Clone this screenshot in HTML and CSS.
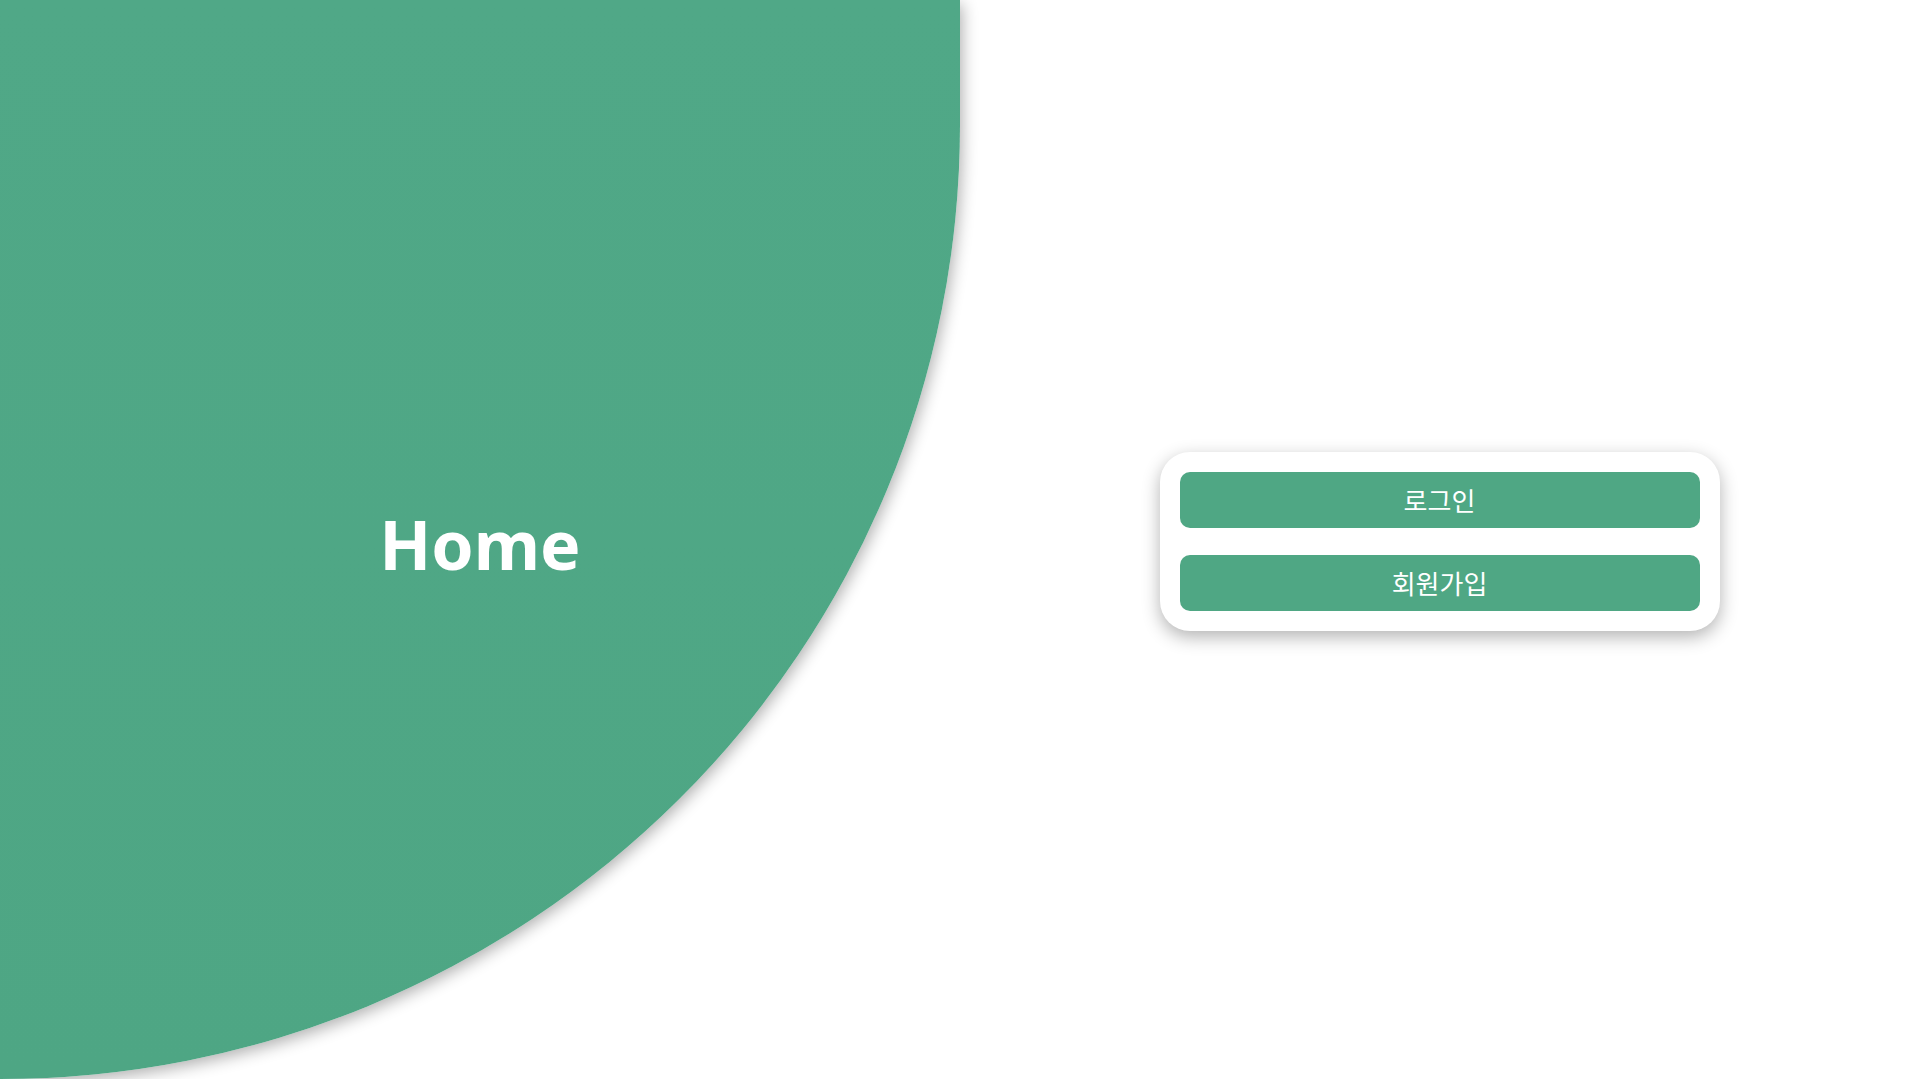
FILE: index.html
```html
<!DOCTYPE html>
<html lang="ko">
<head>
<meta charset="utf-8">
<title>Home</title>
<link rel="stylesheet" href="styles.css">
</head>
<body>
<main class="page">
  <section class="hero">
    <h1 class="hero-title">Home</h1>
  </section>
  <section class="side">
    <div class="card">
      <button class="btn" type="button">로그인</button>
      <button class="btn" type="button">회원가입</button>
    </div>
  </section>
</main>
</body>
</html>
```
FILE: styles.css
```css
* { box-sizing: border-box; }
html, body {
  margin: 0;
  padding: 0;
  height: 100%;
  background: #ffffff;
  overflow: hidden;
}
body {
  font-family: "Noto Sans", "Noto Sans CJK KR", sans-serif;
}
.page {
  display: flex;
  width: 100%;
  height: 100vh;
}
.hero {
  flex: 0 0 960px;
  height: 100vh;
  background: linear-gradient(180deg, #50a887 0%, #4ea684 100%);
  border-bottom-right-radius: 960px 954px;
  box-shadow: 2px 4px 16px rgba(0, 0, 0, 0.32);
  display: flex;
  align-items: center;
  justify-content: center;
  position: relative;
  z-index: 1;
}
.hero-title {
  margin: 0;
  padding-top: 8px;
  color: #ffffff;
  font-family: "Noto Sans", sans-serif;
  font-weight: 700;
  font-size: 68px;
  line-height: 1;
}
.side {
  flex: 1 1 auto;
  display: flex;
  align-items: center;
  justify-content: center;
  padding-top: 3px;
}
.card {
  width: 560px;
  padding: 20px;
  background: #ffffff;
  border-radius: 30px;
  box-shadow: 0 6px 18px rgba(0, 0, 0, 0.3);
  display: flex;
  flex-direction: column;
  gap: 27px;
}
.btn {
  height: 56px;
  border: 0;
  border-radius: 10px;
  background: #4fa784;
  color: #ffffff;
  font-family: "Noto Sans CJK KR", sans-serif;
  font-size: 26px;
  line-height: 1;
  cursor: pointer;
  padding: 0;
}
```
